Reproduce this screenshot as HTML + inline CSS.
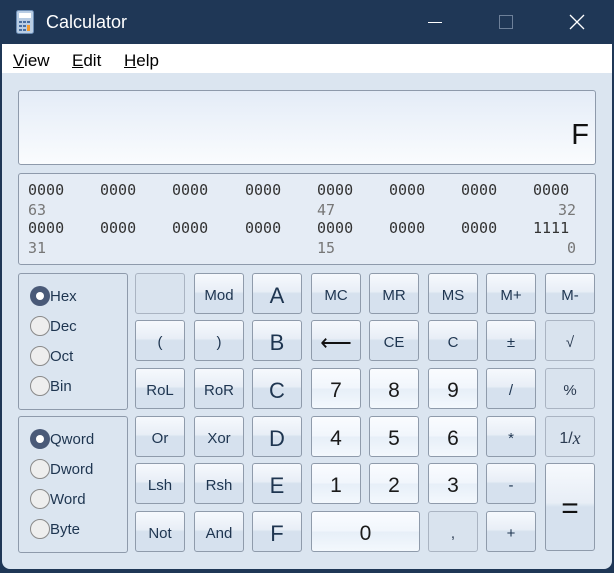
<!DOCTYPE html><html><head><style>
*{margin:0;padding:0;box-sizing:border-box}
body{width:614px;height:573px;position:relative;overflow:hidden;background:#1f3756;font-family:"Liberation Sans",sans-serif}
.a{position:absolute}
#title{left:0;top:0;width:614px;height:44px;background:#1f3756;color:#fff}
#menu{left:2px;top:44px;width:610px;height:29px;background:#fff;font-size:17px;color:#000}
#menu span{position:absolute;top:7px}
#body{left:2px;top:73px;width:610px;height:496px;background:#dbe5f0;border-radius:0 0 8px 8px}
.box{border:1px solid #8e9aab;border-radius:3px}
.b{position:absolute;width:50px;height:41px;border:1px solid #8f9bab;border-radius:3px;background:linear-gradient(#f6f9fd 0%,#e8eef6 45%,#d6e1ee 50%,#d6e1ee 100%);color:#1e3550;font-size:15px;display:flex;align-items:center;justify-content:center;padding-top:4px}
.d{background:linear-gradient(#fafcff 0%,#f1f6fc 48%,#e7eff8 52%,#f3f8fd 100%);font-size:21px;color:#1a1a1a}
.h{font-size:22px;color:#1e3550}
.x{background:#d9e3ee;border-color:#aab4c2;color:#2a3a50}
.mono{font-family:"DejaVu Sans Mono","Liberation Mono",monospace;font-size:15px;color:#333;position:absolute}
.g{color:#777}
.r{position:absolute;font-size:15px;color:#1e3550}
.r i{position:absolute;left:-20px;top:-2px;width:20px;height:20px;border-radius:50%;border:1px solid #8a8a8a;background:#eee}
.r i.on{background:#4a5a78;border:none}
.r i.on:after{content:"";position:absolute;left:6px;top:6px;width:8px;height:8px;border-radius:50%;background:#fff}
</style></head><body>
<div id="title" class="a">
<svg class="a" style="left:16px;top:10px" width="18" height="24" viewBox="0 0 18 24"><rect x="0.5" y="0.5" width="17" height="23" rx="2" fill="#b9cde4" stroke="#6c8db5"/><rect x="3" y="3" width="12" height="5" fill="#fff"/><g fill="#4a6fa0"><rect x="3" y="11" width="3" height="2"/><rect x="7" y="11" width="3" height="2"/><rect x="11" y="11" width="3" height="2"/><rect x="3" y="15" width="3" height="2"/><rect x="7" y="15" width="3" height="2"/><rect x="3" y="19" width="3" height="2"/><rect x="7" y="19" width="3" height="2"/></g><rect x="11" y="15" width="3" height="6" fill="#f29a2e"/></svg>
<div class="a" style="left:46px;top:12px;font-size:18px">Calculator</div>
<div class="a" style="left:428px;top:22px;width:14px;height:1px;background:#fff"></div>
<div class="a" style="left:499px;top:15px;width:14px;height:14px;border:1px solid #6d8099"></div>
<svg class="a" style="left:569px;top:14px" width="16" height="16"><path d="M1 1L15 15M15 1L1 15" stroke="#fff" stroke-width="1.3"/></svg>
</div>
<div id="menu" class="a"><span style="left:11px"><u>V</u>iew</span><span style="left:70px"><u>E</u>dit</span><span style="left:122px"><u>H</u>elp</span></div>
<div id="body" class="a"></div>
<div class="a box" style="left:18px;top:90px;width:578px;height:75px;background:linear-gradient(#e4ecf7,#fafcfe);"><div class="a" style="right:6px;top:28px;font-size:29px;color:#111">F</div></div>
<div class="a box" style="left:18px;top:173px;width:578px;height:92px;background:#e5ecf5"></div>
<div class="mono" style="left:28px;top:181px">0000</div><div class="mono" style="left:100px;top:181px">0000</div><div class="mono" style="left:172px;top:181px">0000</div><div class="mono" style="left:245px;top:181px">0000</div><div class="mono" style="left:317px;top:181px">0000</div><div class="mono" style="left:389px;top:181px">0000</div><div class="mono" style="left:461px;top:181px">0000</div><div class="mono" style="left:533px;top:181px">0000</div>
<div class="mono g" style="left:28px;top:201px">63</div><div class="mono g" style="left:317px;top:201px">47</div><div class="mono g" style="left:558px;top:201px">32</div>
<div class="mono" style="left:28px;top:219px">0000</div><div class="mono" style="left:100px;top:219px">0000</div><div class="mono" style="left:172px;top:219px">0000</div><div class="mono" style="left:245px;top:219px">0000</div><div class="mono" style="left:317px;top:219px">0000</div><div class="mono" style="left:389px;top:219px">0000</div><div class="mono" style="left:461px;top:219px">0000</div><div class="mono" style="left:533px;top:219px">1111</div>
<div class="mono g" style="left:28px;top:239px">31</div><div class="mono g" style="left:317px;top:239px">15</div><div class="mono g" style="left:567px;top:239px">0</div>
<div class="a box" style="left:18px;top:273px;width:110px;height:137px"></div>
<div class="a box" style="left:18px;top:416px;width:110px;height:137px"></div>
<div class="r" style="left:50px;top:288px"><i class="on"></i>Hex</div>
<div class="r" style="left:50px;top:318px"><i></i>Dec</div>
<div class="r" style="left:50px;top:348px"><i></i>Oct</div>
<div class="r" style="left:50px;top:378px"><i></i>Bin</div>
<div class="r" style="left:50px;top:431px"><i class="on"></i>Qword</div>
<div class="r" style="left:50px;top:461px"><i></i>Dword</div>
<div class="r" style="left:50px;top:491px"><i></i>Word</div>
<div class="r" style="left:50px;top:521px"><i></i>Byte</div>

<div class="b x" style="left:135px;top:273px"></div>
<div class="b" style="left:194px;top:273px">Mod</div>
<div class="b h" style="left:252px;top:273px">A</div>
<div class="b" style="left:311px;top:273px">MC</div>
<div class="b" style="left:369px;top:273px">MR</div>
<div class="b" style="left:428px;top:273px">MS</div>
<div class="b" style="left:486px;top:273px">M+</div>
<div class="b" style="left:545px;top:273px">M-</div>

<div class="b" style="left:135px;top:320px">(</div>
<div class="b" style="left:194px;top:320px">)</div>
<div class="b h" style="left:252px;top:320px">B</div>
<div class="b" style="left:311px;top:320px;font-size:22px;color:#111">⟵</div>
<div class="b" style="left:369px;top:320px">CE</div>
<div class="b" style="left:428px;top:320px">C</div>
<div class="b" style="left:486px;top:320px">±</div>
<div class="b x" style="left:545px;top:320px">√</div>

<div class="b" style="left:135px;top:368px">RoL</div>
<div class="b" style="left:194px;top:368px">RoR</div>
<div class="b h" style="left:252px;top:368px">C</div>
<div class="b d" style="left:311px;top:368px">7</div>
<div class="b d" style="left:369px;top:368px">8</div>
<div class="b d" style="left:428px;top:368px">9</div>
<div class="b" style="left:486px;top:368px">/</div>
<div class="b x" style="left:545px;top:368px">%</div>

<div class="b" style="left:135px;top:416px">Or</div>
<div class="b" style="left:194px;top:416px">Xor</div>
<div class="b h" style="left:252px;top:416px">D</div>
<div class="b d" style="left:311px;top:416px">4</div>
<div class="b d" style="left:369px;top:416px">5</div>
<div class="b d" style="left:428px;top:416px">6</div>
<div class="b" style="left:486px;top:416px">*</div>
<div class="b x" style="left:545px;top:416px;font-size:16px">1/<i style="font-family:'Liberation Serif',serif;font-size:18px">x</i></div>

<div class="b" style="left:135px;top:463px">Lsh</div>
<div class="b" style="left:194px;top:463px">Rsh</div>
<div class="b h" style="left:252px;top:463px">E</div>
<div class="b d" style="left:311px;top:463px">1</div>
<div class="b d" style="left:369px;top:463px">2</div>
<div class="b d" style="left:428px;top:463px">3</div>
<div class="b" style="left:486px;top:463px">-</div>
<div class="b" style="left:545px;top:463px;height:88px;font-size:30px;color:#111">=</div>

<div class="b" style="left:135px;top:511px">Not</div>
<div class="b" style="left:194px;top:511px">And</div>
<div class="b h" style="left:252px;top:511px">F</div>
<div class="b d" style="left:311px;top:511px;width:109px">0</div>
<div class="b x" style="left:428px;top:511px">,</div>
<div class="b" style="left:486px;top:511px">+</div>
</body></html>
